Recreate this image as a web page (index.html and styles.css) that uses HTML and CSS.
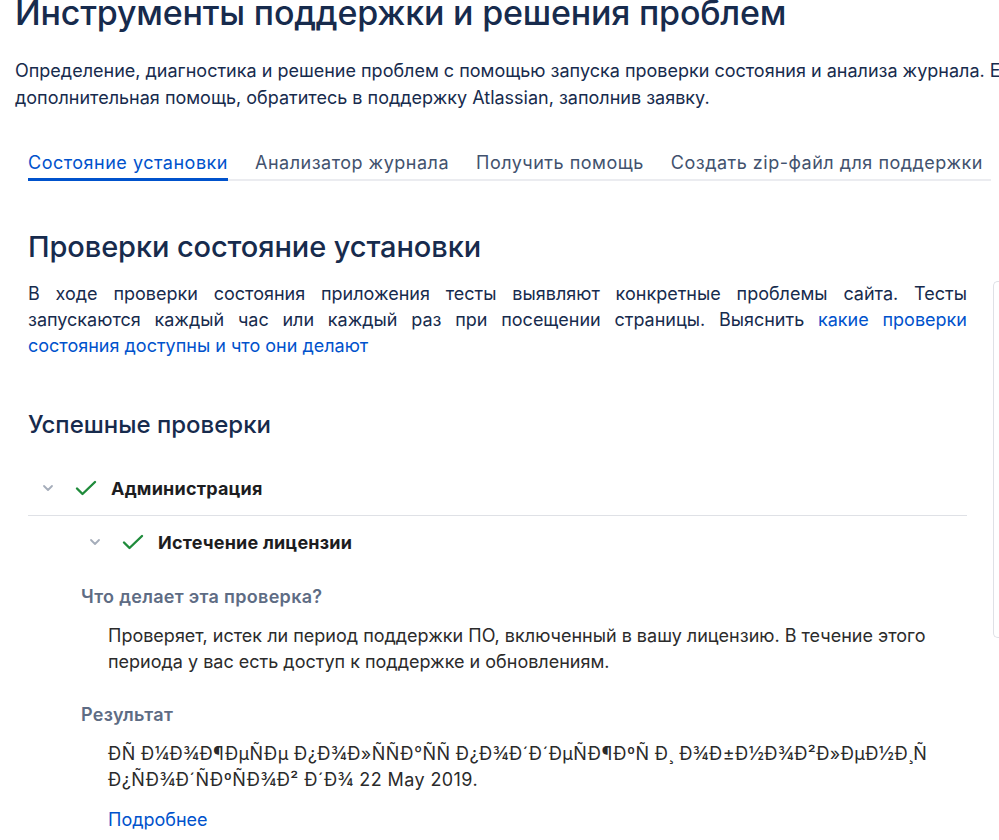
FILE: index.html
```html
<!DOCTYPE html>
<html lang="ru">
<head>
    <meta charset="UTF-8">
    <meta name="viewport" content="width=device-width, initial-scale=1.0">
    <title>Инструменты поддержки и решения проблем</title>
    <link rel="stylesheet" href="styles.css">
</head>
<body>
    <div class="page">
        <header class="intro">
            <h1 class="intro-title">Инструменты поддержки и решения проблем</h1>
            <p class="intro-text">Определение, диагностика и решение проблем с помощью запуска проверки состояния и анализа журнала. Если вам нужна<br>дополнительная помощь, обратитесь в поддержку Atlassian, заполнив заявку.</p>
        </header>

        <div class="layout">
            <main class="content">
                <nav class="tabs">
                    <a class="tab active" href="#">Состояние установки</a>
                    <a class="tab" href="#">Анализатор журнала</a>
                    <a class="tab" href="#">Получить помощь</a>
                    <a class="tab" href="#">Создать zip-файл для поддержки</a>
                </nav>

                <h2 class="section-title">Проверки состояние установки</h2>
                <p class="lead">В ходе проверки состояния приложения тесты выявляют конкретные проблемы сайта. Тесты запускаются каждый час или каждый раз при посещении страницы. Выяснить <a href="#">какие проверки состояния доступны и что они делают</a></p>

                <h3 class="group-title">Успешные проверки</h3>

                <div class="group">
                    <div class="row row-top">
                        <svg class="chevron" width="12" height="8" viewBox="0 0 12 8"><path d="M2 2l4 4 4-4" fill="none" stroke="#a5adba" stroke-width="1.8" stroke-linecap="round" stroke-linejoin="round"/></svg>
                        <svg class="tick" width="22" height="16" viewBox="0 0 22 16"><path d="M2 8.5l5.5 5.5L20 2" fill="none" stroke="#1f8b3b" stroke-width="2.4" stroke-linecap="round" stroke-linejoin="round"/></svg>
                        <span class="row-name">Администрация</span>
                    </div>

                    <div class="check">
                        <div class="row row-sub">
                            <svg class="chevron" width="12" height="8" viewBox="0 0 12 8"><path d="M2 2l4 4 4-4" fill="none" stroke="#a5adba" stroke-width="1.8" stroke-linecap="round" stroke-linejoin="round"/></svg>
                            <svg class="tick" width="22" height="16" viewBox="0 0 22 16"><path d="M2 8.5l5.5 5.5L20 2" fill="none" stroke="#1f8b3b" stroke-width="2.4" stroke-linecap="round" stroke-linejoin="round"/></svg>
                            <span class="row-name">Истечение лицензии</span>
                        </div>

                        <div class="details">
                            <h4 class="label">Что делает эта проверка?</h4>
                            <p class="detail-text">Проверяет, истек ли период поддержки ПО, включенный в вашу лицензию. В течение этого периода у вас есть доступ к поддержке и обновлениям.</p>
                            <h4 class="label label-result">Результат</h4>
                            <p class="detail-text result-text">ÐÑ Ð¼Ð¾Ð¶ÐµÑÐµ Ð¿Ð¾Ð»ÑÑÐ°ÑÑ Ð¿Ð¾Ð´Ð´ÐµÑÐ¶ÐºÑ Ð¸ Ð¾Ð±Ð½Ð¾Ð²Ð»ÐµÐ½Ð¸Ñ Ð¿ÑÐ¾Ð´ÑÐºÑÐ¾Ð² Ð´Ð¾ 22 May 2019.</p>
                            <a class="more" href="#">Подробнее</a>
                        </div>
                    </div>
                </div>
            </main>
            <aside class="side"></aside>
        </div>
    </div>
</body>
</html>
```

FILE: styles.css
```css
html, body {
    margin: 0;
    overflow: hidden;
}
body {
    font-family: Inter, "Noto Sans", sans-serif;
    color: #172b4d;
    background: #fff;
}
a {
    color: #0052cc;
    text-decoration: none;
}
.page {
    width: 1300px;
}
.intro {
    padding-left: 15px;
}
.intro-title {
    margin: -7px 0 0;
    font-size: 34px;
    font-weight: 500;
    line-height: 40px;
    letter-spacing: -0.2px;
}
.intro-text {
    margin: 24px 0 0;
    font-size: 18px;
    line-height: 27px;
    white-space: nowrap;
}
.layout {
    display: flex;
    align-items: flex-start;
}
.content {
    flex: none;
    width: 939px;
    padding-left: 28px;
}
.side {
    flex: none;
    width: 200px;
    height: 355px;
    margin: 170px 0 0 26px;
    border: 1px solid #dfe1e6;
    border-right: none;
    border-radius: 5px 0 0 5px;
}
.tabs {
    display: flex;
    gap: 27px;
    margin: 40px -24px 0 0;
    border-bottom: 2px solid #ebecf0;
    white-space: nowrap;
}
.tab {
    color: #42526e;
    font-size: 18px;
    letter-spacing: 0.5px;
    line-height: 24px;
    padding-bottom: 3px;
    margin-bottom: -2px;
    border-bottom: 3px solid transparent;
}
.tab.active {
    color: #0052cc;
    border-bottom-color: #0052cc;
}
.section-title {
    margin: 48px 0 0;
    font-size: 29px;
    font-weight: 500;
    line-height: 36px;
    letter-spacing: -0.1px;
}
.lead {
    margin: 16px 0 0;
    font-size: 18px;
    line-height: 26px;
    text-align: justify;
}
.group-title {
    margin: 51px 0 0;
    font-size: 24px;
    font-weight: 500;
    line-height: 30px;
}
.group {
    margin-top: 35px;
}
.row {
    display: flex;
    align-items: center;
    height: 26px;
}
.row-top {
    padding-left: 14px;
    padding-bottom: 14px;
    border-bottom: 1px solid #dfe1e6;
}
.row-sub {
    padding-left: 61px;
    margin-top: 13px;
}
.chevron {
    margin-right: 21px;
}
.tick {
    margin-right: 14px;
}
.row-name {
    font-size: 18px;
    font-weight: 700;
    letter-spacing: 0.2px;
    color: #1d1d1f;
}
.details {
    padding-left: 53px;
}
.label {
    margin: 30px 0 0;
    font-size: 18px;
    font-weight: 600;
    letter-spacing: 0.3px;
    line-height: 24px;
    color: #5e6c84;
}
.label-result {
    margin-top: 28px;
}
.detail-text {
    margin: 14px 0 0;
    padding-left: 27px;
    padding-right: 30px;
    font-size: 18px;
    line-height: 26px;
    color: #2b2b2b;
}
.result-text {
    letter-spacing: 0.4px;
}
.more {
    display: block;
    margin-top: 14px;
    padding-left: 27px;
    font-size: 18px;
    line-height: 26px;
}
```
